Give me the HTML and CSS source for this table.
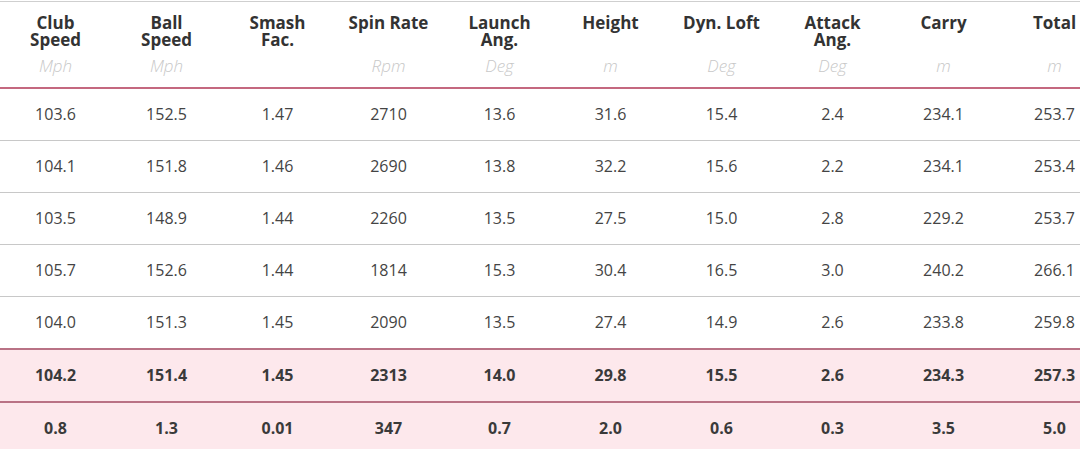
FILE: index.html
```html
<!DOCTYPE html>
<html>
<head>
<meta charset="utf-8">
<link rel="stylesheet" href="styles.css">
</head>
<body>
<div class="wrap">
<table class="stats">
<thead>
<tr>
<th><div class="t">Club<br>Speed</div><div class="u">Mph</div></th>
<th><div class="t">Ball<br>Speed</div><div class="u">Mph</div></th>
<th><div class="t">Smash<br>Fac.</div><div class="u">&nbsp;</div></th>
<th><div class="t">Spin Rate</div><div class="u">Rpm</div></th>
<th><div class="t">Launch<br>Ang.</div><div class="u">Deg</div></th>
<th><div class="t">Height</div><div class="u">m</div></th>
<th><div class="t">Dyn. Loft</div><div class="u">Deg</div></th>
<th><div class="t">Attack<br>Ang.</div><div class="u">Deg</div></th>
<th><div class="t">Carry</div><div class="u">m</div></th>
<th><div class="t">Total</div><div class="u">m</div></th>
</tr>
</thead>
<tbody>
<tr><td>103.6</td><td>152.5</td><td>1.47</td><td>2710</td><td>13.6</td><td>31.6</td><td>15.4</td><td>2.4</td><td>234.1</td><td>253.7</td></tr>
<tr><td>104.1</td><td>151.8</td><td>1.46</td><td>2690</td><td>13.8</td><td>32.2</td><td>15.6</td><td>2.2</td><td>234.1</td><td>253.4</td></tr>
<tr><td>103.5</td><td>148.9</td><td>1.44</td><td>2260</td><td>13.5</td><td>27.5</td><td>15.0</td><td>2.8</td><td>229.2</td><td>253.7</td></tr>
<tr><td>105.7</td><td>152.6</td><td>1.44</td><td>1814</td><td>15.3</td><td>30.4</td><td>16.5</td><td>3.0</td><td>240.2</td><td>266.1</td></tr>
<tr><td>104.0</td><td>151.3</td><td>1.45</td><td>2090</td><td>13.5</td><td>27.4</td><td>14.9</td><td>2.6</td><td>233.8</td><td>259.8</td></tr>
<tr class="avg"><td>104.2</td><td>151.4</td><td>1.45</td><td>2313</td><td>14.0</td><td>29.8</td><td>15.5</td><td>2.6</td><td>234.3</td><td>257.3</td></tr>
<tr class="std"><td>0.8</td><td>1.3</td><td>0.01</td><td>347</td><td>0.7</td><td>2.0</td><td>0.6</td><td>0.3</td><td>3.5</td><td>5.0</td></tr>
</tbody>
</table>
</div>
</body>
</html>
```
FILE: styles.css
```css
html, body {
  margin: 0;
  padding: 0;
  background: #fff;
}
body {
  font-family: "Open Sans", "Liberation Sans", sans-serif;
  color: #333;
  overflow: hidden;
}
.wrap {
  width: 1080px;
  height: 449px;
  overflow: hidden;
  padding-top: 1px;
}
.stats {
  width: 1110px;
  table-layout: fixed;
  border-collapse: collapse;
  border-top: 1px solid #cfcfcf;
}
.stats th {
  height: 86px;
  padding: 12px 0 0;
  vertical-align: top;
  text-align: center;
  border-bottom: 2px solid #c4687f;
  box-sizing: border-box;
}
.stats .t {
  font-size: 17px;
  font-weight: 700;
  line-height: 17px;
  height: 34px;
  color: #333;
}
.stats .u {
  margin-top: 8px;
  font-size: 17px;
  font-weight: 300;
  font-style: italic;
  line-height: 20px;
  color: #c8c8c8;
}
.stats td {
  height: 51px;
  padding: 0;
  text-align: center;
  font-size: 16px;
  color: #444;
  border-bottom: 1px solid #c8c8c8;
}
.stats tr.avg td {
  background: #fde8ec;
  font-weight: 700;
  color: #3a3a3a;
  border-top: 2px solid #b97285;
  border-bottom: 2px solid #b97285;
}
.stats tr.std td {
  background: #fde8ec;
  font-weight: 700;
  color: #3a3a3a;
  border-bottom: none;
}
```
